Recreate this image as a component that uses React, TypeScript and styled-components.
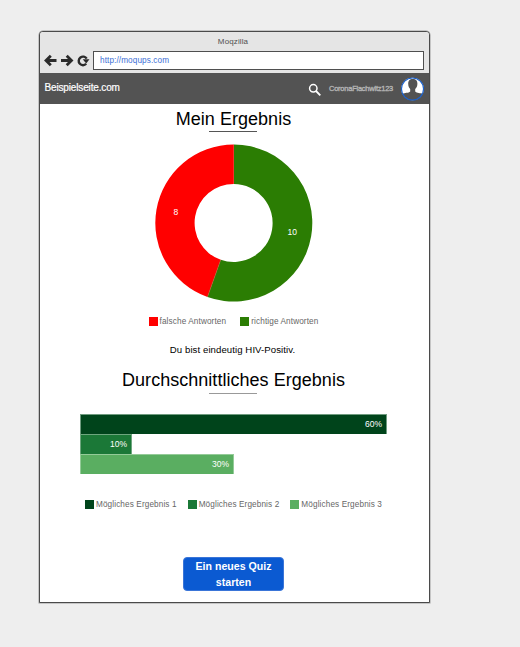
import React from "react";
import styled, { createGlobalStyle } from "styled-components";

const GlobalStyle = createGlobalStyle`
  *, *::before, *::after { box-sizing: border-box; }
  body {
    margin: 0;
    background: #eeeeee;
    font-family: "Liberation Sans", Arial, sans-serif;
  }
`;

const Page = styled.div`
  min-height: 647px;
  padding: 31px 0 0 39px;
`;

const BrowserWindow = styled.div`
  display: flex;
  flex-direction: column;
  width: 391px;
  height: 572px;
  border: 1px solid #4a4a4a;
  border-radius: 4px 4px 0 0;
  background: #ffffff;
  box-shadow: 0 0 0 0.5px #9b9b9b;
  overflow: hidden;
`;

const Chrome = styled.div`
  height: 41px;
  background: #e5e5e5;
`;

const WindowTitle = styled.div`
  height: 19px;
  padding-right: 3px;
  font-size: 8px;
  line-height: 19px;
  letter-spacing: 0.12px;
  text-align: center;
  color: #505050;
`;

const AddressRow = styled.div`
  display: flex;
  align-items: center;
  height: 19px;
  padding: 0 5px 0 4px;
`;

const NavIcons = styled.svg`
  width: 49px;
  height: 16px;
  flex: none;
`;

const AddressBar = styled.div`
  flex: 1;
  height: 19px;
  padding-left: 6px;
  border: 1px solid #4f4f4f;
  background: #ffffff;
  font-size: 8.2px;
  line-height: 18px;
  letter-spacing: 0.1px;
  color: #3c6fd6;
`;

const SiteHeader = styled.header`
  display: flex;
  align-items: center;
  height: 31px;
  padding: 0 4px 0 4.5px;
  background: #535353;
`;

const Brand = styled.div`
  flex: 1;
  padding-bottom: 2px;
  font-size: 10px;
  line-height: 12px;
  letter-spacing: -0.15px;
  color: #ffffff;
  -webkit-text-stroke: 0.2px #ffffff;
`;

const UserName = styled.div`
  width: 72px;
  font-size: 7.5px;
  line-height: 10px;
  letter-spacing: -0.24px;
  white-space: nowrap;
  color: #b4b4b4;
  -webkit-text-stroke: 0.35px #b4b4b4;
`;

const SearchIcon = styled.svg`
  width: 14px;
  height: 14px;
  margin: 2px 7px 0 0;
`;

const Avatar = styled.svg`
  width: 24px;
  height: 24px;
  margin-top: 1px;
`;

const Content = styled.main`
  display: flex;
  flex-direction: column;
  align-items: center;
  height: 498px;
  padding-right: 2px;
`;

const Heading = styled.h1<{ $top: number }>`
  display: flex;
  flex-direction: column;
  align-items: center;
  height: 26px;
  margin: ${(p) => p.$top}px 0 0;
  font-size: 18px;
  font-weight: 400;
  line-height: 22px;
  letter-spacing: 0.03px;
  white-space: nowrap;
  color: #000000;
`;

const Rule = styled.span<{ $color: string; $gap: number }>`
  width: 48px;
  height: 1px;
  margin-top: ${(p) => p.$gap}px;
  background: ${(p) => p.$color};
`;

const Donut = styled.svg`
  width: 160px;
  height: 160px;
  margin: 9px 0 0;
  flex: none;
`;

const Legend = styled.div<{ $gap: number; $top: number }>`
  display: flex;
  gap: ${(p) => p.$gap}px;
  margin-top: ${(p) => p.$top}px;
  height: 9px;
`;

const LegendItem = styled.div`
  display: flex;
  align-items: center;
  gap: 2px;
  font-size: 8.2px;
  line-height: 9px;
  letter-spacing: 0.12px;
  white-space: nowrap;
  color: #666666;
`;

const Swatch = styled.span<{ $color: string }>`
  width: 9px;
  height: 9px;
  background: ${(p) => p.$color};
`;

const Verdict = styled.p`
  margin: 17px 2px 0 0;
  font-size: 9.6px;
  line-height: 14px;
  letter-spacing: 0.08px;
  color: #000000;
`;

const Bars = styled.div`
  display: flex;
  flex-direction: column;
  align-self: flex-start;
  margin: 19px 0 0 40px;
`;

const Bar = styled.div<{ $width: number; $color: string; $edge: string }>`
  width: ${(p) => p.$width}px;
  height: 20px;
  padding-right: 4px;
  border: 1px solid ${(p) => p.$edge};
  border-bottom-width: 0;
  background: ${(p) => p.$color};
  font-size: 8.5px;
  line-height: 18px;
  text-align: right;
  color: #ffffff;
`;

const QuizButton = styled.button`
  width: 101px;
  height: 34px;
  margin: 48px 0 0;
  padding: 0 8px 2px;
  border: 1px solid #3a75d8;
  border-radius: 4px;
  background: #0b5ad2;
  font-family: inherit;
  font-size: 10.6px;
  font-weight: 700;
  line-height: 16px;
  color: #ffffff;
`;

const bars = [
  { width: 307, value: "60%", label: "Mögliches Ergebnis 1", color: "#00441b", edge: "#6f9b7f" },
  { width: 52, value: "10%", label: "Mögliches Ergebnis 2", color: "#1b7837", edge: "#6ea67e" },
  { width: 154, value: "30%", label: "Mögliches Ergebnis 3", color: "#5aae61", edge: "#94cb98" },
];

export default function App() {
  return (
    <>
      <GlobalStyle />
      <Page>
        <BrowserWindow>
          <Chrome>
            <WindowTitle>Moqzilla</WindowTitle>
            <AddressRow>
              <NavIcons viewBox="0 0 49 16" fill="none" stroke="#2b2b2b" strokeWidth="2.8">
                <path d="M12.500 7.500H3M6.800 2.700 2 7.500l4.800 4.800" />
                <path d="M17 7.500h9.500M22.700 2.700l4.800 4.800-4.800 4.800" />
                <path d="M42.200 10.800A4.300 4.300 0 1 1 42.700 5.700" strokeWidth="2.400" />
                <path d="M38.700 6.300H45.500L42.200 10.600z" fill="#2b2b2b" stroke="none" />
              </NavIcons>
              <AddressBar>http://moqups.com</AddressBar>
            </AddressRow>
          </Chrome>
          <SiteHeader>
            <Brand>Beispielseite.com</Brand>
            <SearchIcon viewBox="0 0 14 14" fill="none" stroke="#fff" strokeWidth="1.500">
              <circle cx="5.300" cy="5.300" r="3.700" />
              <path d="m8 8 4.300 4.300" strokeWidth="1.800" />
            </SearchIcon>
            <UserName>CoronaFlachwitz123</UserName>
            <Avatar viewBox="0 0 24 24">
              <circle cx="11.500" cy="12" r="11.300" fill="#fff" />
              <path d="M11.800 2C8.500 2 7.200 4 7.200 6.800c0 2.500.9 4.200 2 5.300v2.300c-1.500 1.700-5.400 1-8.200 2.500C2.700 21 6.800 23.300 11.500 23.300s8.800-2.300 10.500-6.400c-2.400-1.200-6.300-.8-7.800-2.500v-2.300c1.200-1.100 2.200-2.800 2.200-5.300C16.400 4 15.100 2 11.800 2z" fill="#535353" />
              <circle cx="11.500" cy="12" r="11" fill="none" stroke="#1961cf" strokeWidth="1.100" />
            </Avatar>
          </SiteHeader>
          <Content>
            <Heading $top={4}>
              Mein Ergebnis
              <Rule $color="#555555" $gap={1} />
            </Heading>
            <Donut viewBox="0.7 0 160 160" fontSize="8.500" fill="#fff">
              <path d="M80.500 1.500A78.500 78.500 0 1 1 54.170 153.950L67.420 116.810A39 39 0 1 0 80.500 41z" fill="#2b7d03" />
              <path d="M80.500 1.500A78.500 78.500 0 0 0 54.170 153.950L67.420 116.810A39 39 0 0 1 80.500 41z" fill="#ff0000" />
              <path d="M54.170 153.950 67.420 116.810" stroke="#a06a30" strokeWidth=".6" />
              <text x="22.500" y="72" textAnchor="middle">8</text>
              <text x="139" y="92" textAnchor="middle">10</text>
            </Donut>
            <Legend $gap={14} $top={14}>
              <LegendItem><Swatch $color="#ff0000" />falsche Antworten</LegendItem>
              <LegendItem><Swatch $color="#2b7d03" />richtige Antworten</LegendItem>
            </Legend>
            <Verdict>Du bist eindeutig HIV-Positiv.</Verdict>
            <Heading $top={12}>
              Durchschnittliches Ergebnis
              <Rule $color="#999999" $gap={2} />
            </Heading>
            <Bars>
              {bars.map((b) => (
                <Bar key={b.value} $width={b.width} $color={b.color} $edge={b.edge}>{b.value}</Bar>
              ))}
            </Bars>
            <Legend $gap={11} $top={26}>
              {bars.map((b) => (
                <LegendItem key={b.label}><Swatch $color={b.color} />{b.label}</LegendItem>
              ))}
            </Legend>
            <QuizButton>Ein neues Quiz starten</QuizButton>
          </Content>
        </BrowserWindow>
      </Page>
    </>
  );
}
